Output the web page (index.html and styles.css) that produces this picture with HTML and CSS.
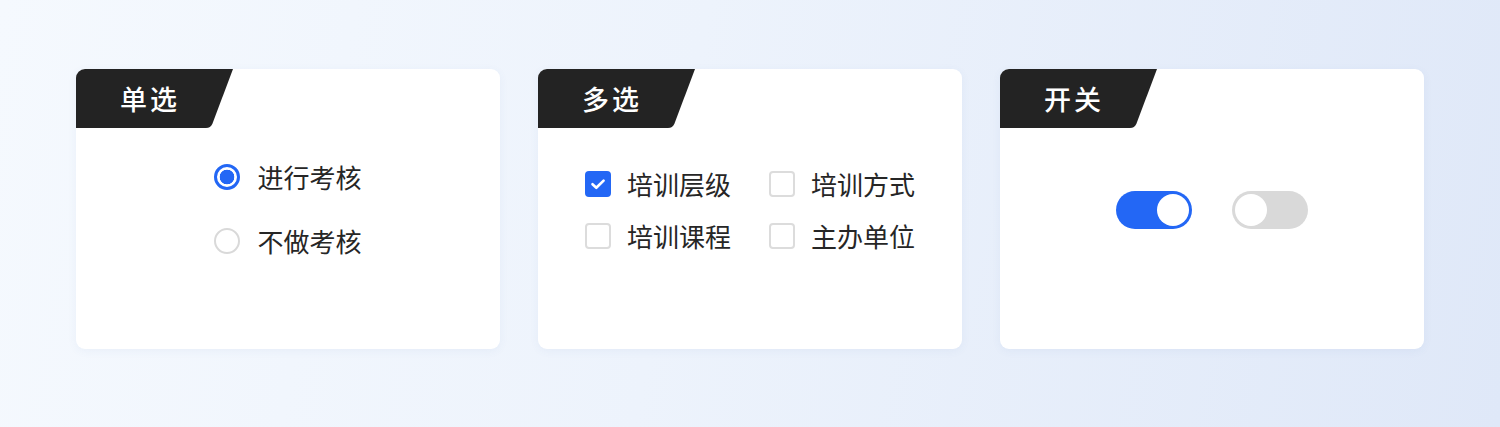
FILE: index.html
```html
<!DOCTYPE html>
<html lang="zh-CN">
<head>
<meta charset="utf-8">
<title>控件</title>
<link rel="stylesheet" href="styles.css">
</head>
<body>
<main class="stage">
  <section class="card">
    <div class="tag">单选</div>
    <div class="body body-radio">
      <div class="radio-list">
        <label class="opt"><span class="radio checked"></span><span class="txt">进行考核</span></label>
        <label class="opt"><span class="radio"></span><span class="txt">不做考核</span></label>
      </div>
    </div>
  </section>
  <section class="card">
    <div class="tag">多选</div>
    <div class="body body-check">
      <div class="check-grid">
        <label class="opt"><span class="check checked"><svg viewBox="0 0 26 26" width="26" height="26"><path d="M7.5 13.2 L11.3 16.8 L18.6 9.6" fill="none" stroke="#fff" stroke-width="2.6" stroke-linecap="round" stroke-linejoin="round"/></svg></span><span class="txt">培训层级</span></label>
        <label class="opt"><span class="check"></span><span class="txt">培训方式</span></label>
        <label class="opt"><span class="check"></span><span class="txt">培训课程</span></label>
        <label class="opt"><span class="check"></span><span class="txt">主办单位</span></label>
      </div>
    </div>
  </section>
  <section class="card">
    <div class="tag">开关</div>
    <div class="body body-switch">
      <span class="switch on"><span class="knob"></span></span>
      <span class="switch"><span class="knob"></span></span>
    </div>
  </section>
</main>
</body>
</html>
```

FILE: styles.css
```css
html, body {
  margin: 0;
  padding: 0;
}
body {
  width: 1500px;
  height: 427px;
  overflow: hidden;
  background: linear-gradient(100deg, #f5f9fe 0%, #edf3fc 45%, #dfe8f8 100%);
  font-family: "Noto Sans CJK SC", "Noto Sans", sans-serif;
  color: #262626;
}
.stage {
  display: flex;
  gap: 38px;
  padding: 69px 0 0 76px;
}
.card {
  width: 424px;
  height: 280px;
  background: #fff;
  border-radius: 9px;
  overflow: hidden;
  box-shadow: 0 2px 10px rgba(60, 100, 170, 0.06);
  display: flex;
  flex-direction: column;
}
.tag {
  width: 157px;
  height: 59px;
  background: #232323;
  color: #fff;
  font-size: 27px;
  font-weight: 500;
  letter-spacing: 3px;
  line-height: 60px;
  padding-left: 44px;
  box-sizing: border-box;
  clip-path: path('M0 0 H157 L136.5 54.5 Q134.6 59 130 59 H0 Z');
}
.body {
  display: flex;
  justify-content: center;
}
.body-radio {
  padding-top: 36px;
}
.radio-list {
  display: flex;
  flex-direction: column;
  gap: 38px;
}
.opt {
  display: flex;
  align-items: center;
  height: 26px;
  font-size: 26px;
  line-height: 26px;
}
.radio {
  width: 26px;
  height: 26px;
  box-sizing: border-box;
  border-radius: 50%;
  border: 2px solid #d9d9d9;
  margin-right: 17px;
  flex: none;
}
.radio.checked {
  border: 3px solid #2367f5;
  background: radial-gradient(circle, #2367f5 0 7px, #fff 7.6px);
}
.body-check {
  padding-top: 43px;
}
.check-grid {
  display: grid;
  grid-template-columns: 146px auto;
  column-gap: 38px;
  row-gap: 26px;
}
.check {
  width: 26px;
  height: 26px;
  box-sizing: border-box;
  border-radius: 4px;
  border: 2px solid #dcdcdc;
  margin-right: 16px;
  flex: none;
  display: flex;
}
.check.checked {
  border: none;
  background: #2367f5;
}
.body-switch {
  padding-top: 63px;
  gap: 40px;
}
.switch {
  width: 76px;
  height: 38px;
  border-radius: 19px;
  background: #d9d9d9;
  box-sizing: border-box;
  padding: 3px;
  display: flex;
  justify-content: flex-start;
}
.switch.on {
  background: #2367f5;
  justify-content: flex-end;
}
.knob {
  width: 32px;
  height: 32px;
  border-radius: 50%;
  background: #fff;
}
```
